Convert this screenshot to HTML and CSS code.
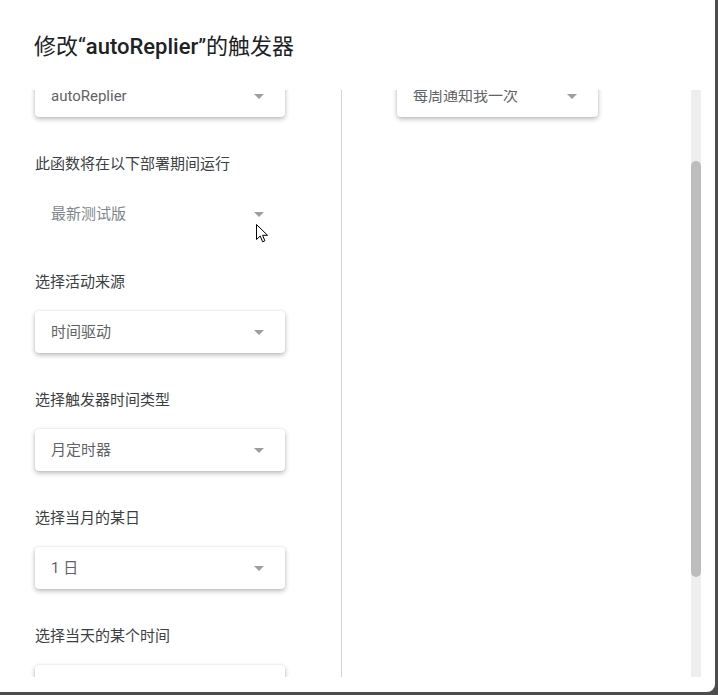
FILE: index.html
```html
<!DOCTYPE html>
<html lang="zh-CN">
<head>
<meta charset="utf-8">
<title>修改触发器</title>
<link rel="stylesheet" href="styles.css">
</head>
<body>
<div class="dialog">
  <div class="header">
    <h1 class="title">修改“<span class="title-latin">autoReplier</span>”的触发器</h1>
  </div>
  <div class="body">
    <div class="viewport">
      <div class="col col-left">
        <div class="stack">
          <div class="field">
            <div class="select card"><span class="value latin">autoReplier</span><span class="arrow"></span></div>
          </div>
          <div class="field">
            <div class="label">此函数将在以下部署期间运行</div>
            <div class="select flat"><span class="value muted">最新测试版</span><span class="arrow"></span></div>
          </div>
          <div class="field">
            <div class="label">选择活动来源</div>
            <div class="select card"><span class="value">时间驱动</span><span class="arrow"></span></div>
          </div>
          <div class="field">
            <div class="label">选择触发器时间类型</div>
            <div class="select card"><span class="value">月定时器</span><span class="arrow"></span></div>
          </div>
          <div class="field">
            <div class="label">选择当月的某日</div>
            <div class="select card"><span class="value">1 日</span><span class="arrow"></span></div>
          </div>
          <div class="field">
            <div class="label">选择当天的某个时间</div>
            <div class="select card"><span class="arrow"></span></div>
          </div>
        </div>
      </div>
      <div class="col col-right">
        <div class="stack">
          <div class="field">
            <div class="select card narrow"><span class="value">每周通知我一次</span><span class="arrow"></span></div>
          </div>
        </div>
      </div>
    </div>
    <div class="scrollbar"><div class="thumb"></div></div>
  </div>
</div>
<svg class="cursor" width="13" height="20" viewBox="0 0 13 20" xmlns="http://www.w3.org/2000/svg">
  <path d="M0.5 0.5 L0.5 15.5 L4.2 12 L6.6 17.8 L8.9 16.8 L6.6 11.3 L11.5 11.3 Z" fill="#ffffff" stroke="#000000" stroke-width="1" stroke-linejoin="miter"/>
</svg>
</body>
</html>
```
FILE: styles.css
```css
* { box-sizing: border-box; }

html, body {
  margin: 0;
  padding: 0;
}

body {
  background: #4d4d4d;
  width: 718px;
  height: 695px;
  overflow: hidden;
  font-family: "Roboto", "Noto Sans CJK SC", sans-serif;
  position: relative;
}

.dialog {
  width: 715px;
  height: 692px;
  background: #ffffff;
  border-bottom-right-radius: 8px;
  display: flex;
  flex-direction: column;
}

.header {
  height: 90px;
  flex: none;
  padding: 33px 0 0 34px;
}

.title {
  margin: 0;
  font-size: 22px;
  line-height: 28px;
  font-weight: 400;
  color: #202124;
}

.title-latin {
  font-weight: 500;
}

.body {
  height: 587px;
  flex: none;
  display: flex;
  padding-right: 14px;
}

.viewport {
  flex: 1;
  display: flex;
  overflow: hidden;
}

.col {
  height: 100%;
  overflow: hidden;
}

.col-left {
  width: 342px;
  flex: none;
  border-right: 1px solid #d4d4d4;
  padding-left: 35px;
}

.col-right {
  flex: 1;
  padding-left: 55px;
}

.stack {
  margin-top: -15px;
  display: flex;
  flex-direction: column;
}

.field {
  margin-bottom: 36px;
}

.label {
  font-size: 15px;
  line-height: 22px;
  height: 22px;
  margin-bottom: 18px;
  color: #3c4043;
  white-space: nowrap;
}

.select {
  width: 250px;
  height: 42px;
  display: flex;
  align-items: center;
  justify-content: space-between;
  padding: 0 21px 0 16px;
  border-radius: 4px;
  background: #ffffff;
}

.select.narrow {
  width: 201px;
}

.card {
  box-shadow: 0 2px 5px rgba(0, 0, 0, 0.28), 0 0 2px rgba(0, 0, 0, 0.08);
}

.value {
  font-size: 15px;
  line-height: 20px;
  color: #5f6368;
  white-space: nowrap;
}

.value.muted {
  color: #80868b;
}

.arrow {
  width: 0;
  height: 0;
  border-left: 5px solid transparent;
  border-right: 5px solid transparent;
  border-top: 5px solid #9e9e9e;
  margin-top: 1px;
  margin-left: auto;
}

.scrollbar {
  width: 10px;
  flex: none;
  background: #eeeeee;
  padding-top: 71px;
}

.thumb {
  height: 416px;
  border-radius: 5px;
  background: #bdbdbd;
}

.cursor {
  position: absolute;
  left: 256px;
  top: 224px;
}
```
